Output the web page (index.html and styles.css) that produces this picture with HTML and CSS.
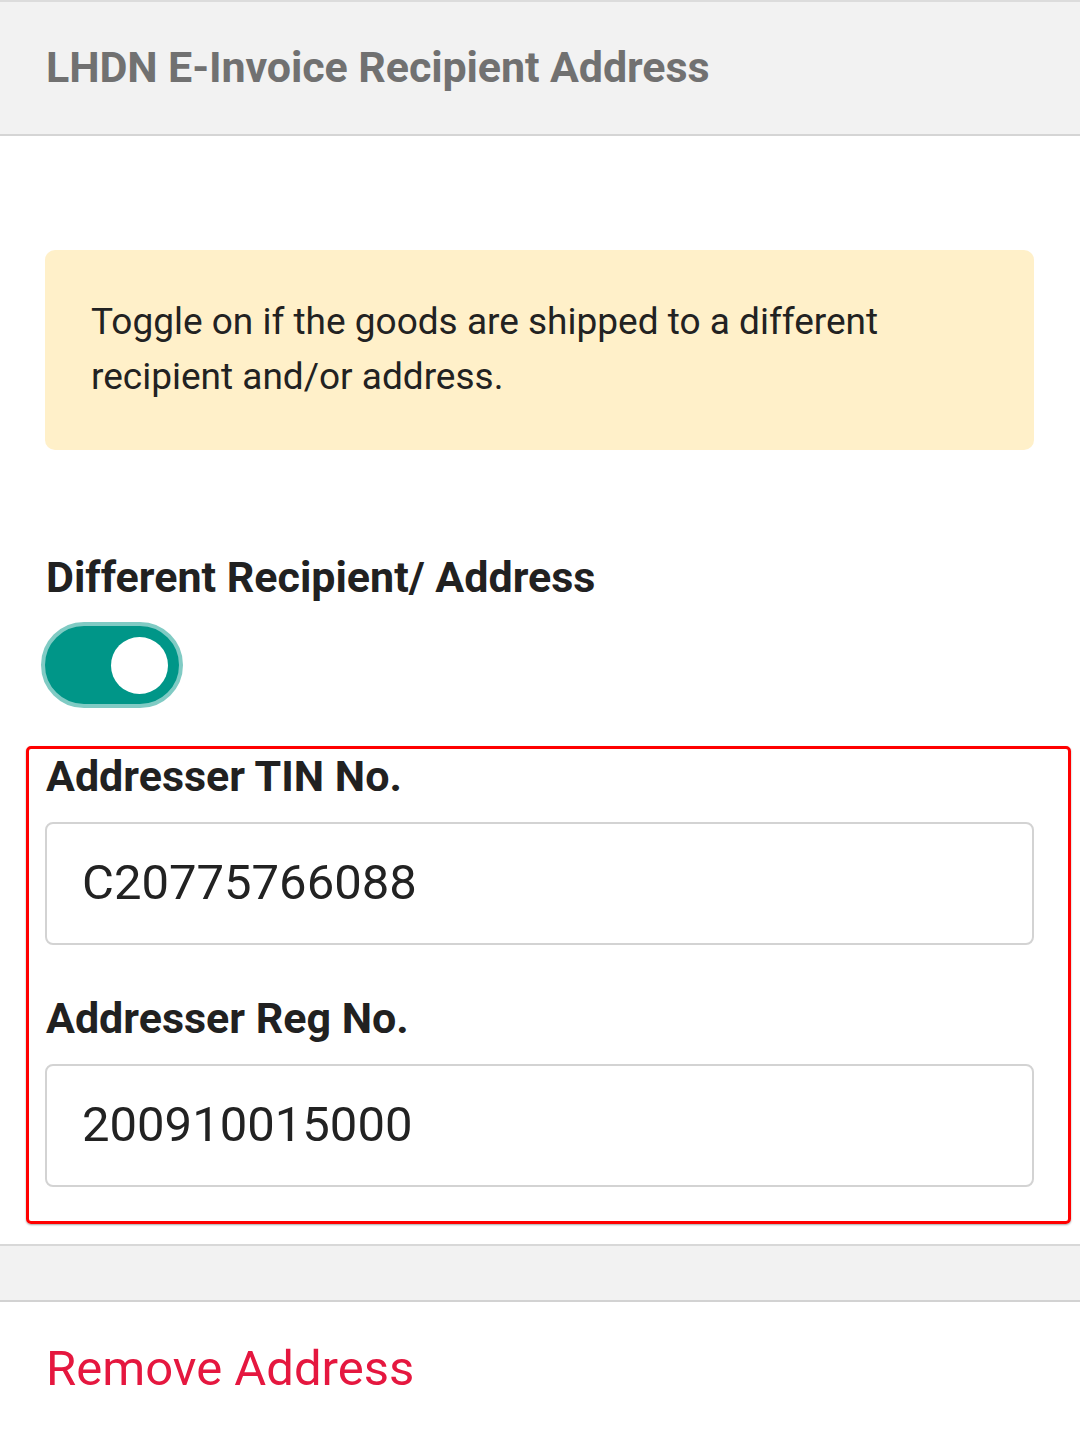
FILE: index.html
```html
<!DOCTYPE html>
<html>
<head>
<meta charset="utf-8">
<link rel="stylesheet" href="styles.css">
</head>
<body>
<div class="page">
  <header class="header">
    <h1 class="title">LHDN E-Invoice Recipient Address</h1>
  </header>
  <section class="content">
    <div class="notice">Toggle on if the goods are shipped to a different recipient and/or address.</div>
    <div class="field-label toggle-label">Different Recipient/ Address</div>
    <div class="toggle"><span class="knob"></span></div>
    <div class="highlight">
      <div class="field-label">Addresser TIN No.</div>
      <div class="input">C20775766088</div>
      <div class="field-label second">Addresser Reg No.</div>
      <div class="input">200910015000</div>
    </div>
  </section>
  <div class="band"></div>
  <div class="footer">
    <a class="remove">Remove Address</a>
  </div>
</div>
</body>
</html>
```

FILE: styles.css
```css
html, body {
  margin: 0;
  padding: 0;
  background: #ffffff;
}
body {
  font-family: Roboto, "Noto Sans", sans-serif;
  color: #222222;
}
.page {
  width: 1080px;
  min-height: 1432px;
  border-top: 2px solid #dcdcdc;
  box-sizing: border-box;
}
.header {
  background: #f2f2f2;
  height: 132px;
  border-bottom: 2px solid #d5d5d5;
  display: flex;
  align-items: center;
  padding-left: 46px;
}
.title {
  margin: 0;
  font-size: 43px;
  font-weight: 700;
  color: #717171;
  padding-bottom: 2px;
  letter-spacing: -0.1px;
}
.content {
  padding: 114px 46px 0 45px;
}
.notice {
  background: #fff0c9;
  border-radius: 10px;
  height: 200px;
  box-sizing: border-box;
  padding: 44px 120px 0 46px;
  font-size: 37px;
  line-height: 55px;
  color: #222;
}
.field-label {
  font-size: 43px;
  font-weight: 700;
  line-height: 48px;
  color: #212121;
}
.toggle-label {
  margin-top: 103px;
  padding-left: 1px;
}
.toggle {
  margin-top: 21px;
  margin-left: -4px;
  width: 142px;
  height: 86px;
  box-sizing: border-box;
  border-radius: 43px;
  background: #009688;
  border: 4px solid #80cbc4;
  display: flex;
  align-items: center;
  justify-content: flex-end;
  padding-right: 11px;
}
.knob {
  width: 57px;
  height: 57px;
  border-radius: 50%;
  background: #ffffff;
}
.highlight {
  margin: 38px -37px 0 -19px;
  border: 3px solid #ff0000;
  border-radius: 5px;
  box-shadow: 0 1px 2px rgba(0,0,0,0.35);
  padding: 3px 34px 34px 16px;
}
.highlight .field-label {
  padding-left: 1px;
}
.highlight .second {
  margin-top: 49px;
}
.input {
  margin-top: 22px;
  height: 123px;
  box-sizing: border-box;
  border: 2px solid #d3d3d3;
  border-radius: 8px;
  display: flex;
  align-items: center;
  padding-left: 35px;
  font-size: 49px;
  color: #222;
  padding-bottom: 2px;
}
.band {
  margin-top: 20px;
  height: 54px;
  background: #f2f2f2;
  border-top: 2px solid #d8d8d8;
  border-bottom: 2px solid #d2d2d2;
}
.footer {
  padding: 38px 46px 30px;
}
.remove {
  font-size: 49px;
  color: #e5173f;
  display: inline-block;
}
```
